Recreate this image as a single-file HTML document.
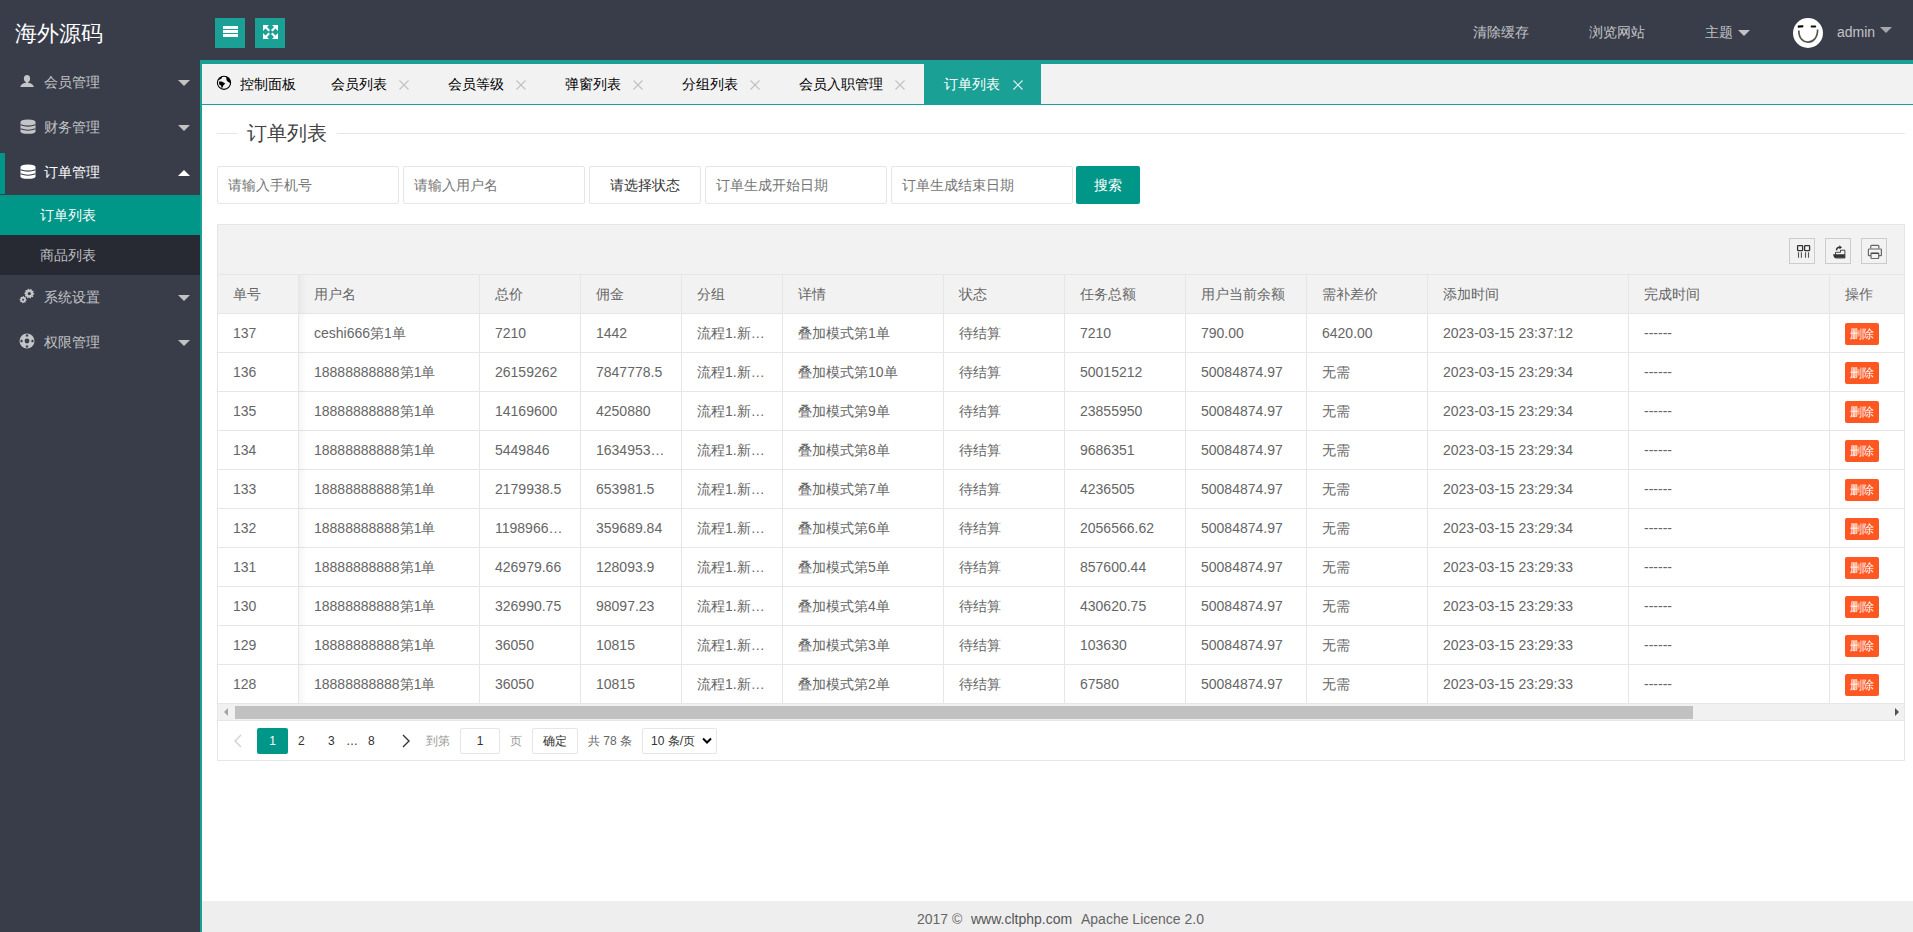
<!DOCTYPE html><html><head><meta charset="utf-8"><title>订单列表</title><style>
*{margin:0;padding:0;box-sizing:border-box}
html,body{width:1913px;height:932px;overflow:hidden;background:#fff;font-family:"Liberation Sans",sans-serif;font-size:14px;color:#333}
.abs{position:absolute}
.hdr{position:absolute;left:0;top:0;width:1913px;height:60px;background:#393D49}
.side{position:absolute;left:0;top:60px;width:200px;height:872px;background:#393D49}
.logo{position:absolute;left:15px;top:16px;font-size:22px;line-height:36px;color:#fff;white-space:nowrap}
.hbtn{position:absolute;top:18px;width:30px;height:30px;background:#1AA094}
.htxt{position:absolute;top:22px;line-height:20px;font-size:14px;color:rgba(255,255,255,.7);white-space:nowrap}
.tri{position:absolute;width:0;height:0;border-style:solid;border-width:6px 6px 0 6px;border-color:#c2c2c2 transparent transparent transparent}
.nav{position:absolute;left:0;width:200px;height:45px}
.nav .t{position:absolute;left:44px;top:0;line-height:45px;font-size:14px;color:rgba(255,255,255,.7);white-space:nowrap}
.nav svg{position:absolute}
.sub{position:absolute;left:0;width:200px;height:40px}
.sub .t{position:absolute;left:40px;top:0;line-height:40px;font-size:14px;color:rgba(255,255,255,.7)}
.bodyl{position:absolute;left:200px;top:60px;width:2px;height:872px;background:#1AA094}
.bodyt{position:absolute;left:200px;top:60px;width:1713px;height:4px;background:#1AA094}
.tabs{position:absolute;left:202px;top:64px;width:1711px;height:41px;background:#f2f2f2;border-bottom:1px solid #1AA094}
.tab{position:absolute;top:0;height:40px;line-height:40px;font-size:14px;color:#000;white-space:nowrap}
.tab .x{position:absolute;top:0;color:#c2c2c2}
.footer{position:absolute;left:202px;top:901px;width:1711px;height:31px;background:#eee;text-align:center;color:#666;font-size:14px;line-height:31px}
.fieldline{position:absolute;top:133px;height:1px;background:#e6e6e6}
.legend{position:absolute;left:247px;top:118px;font-size:20px;line-height:30px;color:#444;font-weight:300}
.inp{position:absolute;top:166px;height:38px;width:182px;border:1px solid #e6e6e6;border-radius:2px;background:#fff;padding-left:10px;line-height:36px;color:#757575;font-size:14px;white-space:nowrap}
.btn{position:absolute;top:166px;height:38px;width:64px;left:1076px;background:#009688;border-radius:2px;color:#fff;text-align:center;line-height:38px;font-size:14px}
.tbl{position:absolute;left:217px;top:224px;width:1688px;height:537px;border:1px solid #e6e6e6;background:#fff}
.tool{position:absolute;left:0;top:0;width:1686px;height:50px;background:#f2f2f2;border-bottom:1px solid #e6e6e6}
.ticon{position:absolute;top:13px;width:26px;height:26px;border:1px solid #ccc;overflow:visible}
.cell{position:absolute;height:39px;line-height:40px;font-size:14px;color:#666;white-space:nowrap;overflow:hidden;text-overflow:ellipsis;padding:0 15px}
.hline{position:absolute;left:217px;width:1688px;height:1px;background:#e6e6e6}
.vline{position:absolute;width:1px;background:#e6e6e6}
.del{position:absolute;left:1845px;width:34px;height:22px;background:#FF5722;border-radius:2px;color:#fff;font-size:12px;line-height:22px;text-align:center}
.pg{position:absolute;top:728px;height:26px;line-height:26px;font-size:12px;color:#333;white-space:nowrap}
</style></head><body>
<div class="hdr"></div>
<div class="logo">海外源码</div>
<div class="hbtn" style="left:215px"><svg width="30" height="30" viewBox="0 0 30 30"><rect x="8" y="8" width="15" height="3" fill="#fff"/><rect x="8" y="12" width="15" height="3" fill="#fff"/><rect x="8" y="16" width="15" height="3" fill="#fff"/></svg></div>
<div class="hbtn" style="left:255px"><svg width="30" height="30" viewBox="0 0 30 30" fill="#fff"><path d="M8 7h6l-2 2 3 3-1.5 1.5-3-3-2.5 2.5z"/><path d="M23 7h-6l2 2-3 3 1.5 1.5 3-3 2.5 2.5z"/><path d="M8 21h6l-2-2 3-3-1.5-1.5-3 3-2.5-2.5z"/><path d="M23 21h-6l2-2-3-3 1.5-1.5 3 3 2.5-2.5z"/></svg></div>
<div class="htxt" style="left:1473px">清除缓存</div>
<div class="htxt" style="left:1589px">浏览网站</div>
<div class="htxt" style="left:1705px">主题</div>
<div class="tri" style="left:1738px;top:30px"></div>
<svg class="abs" style="left:1793px;top:18px" width="30" height="30" viewBox="0 0 30 30"><circle cx="15" cy="15" r="15" fill="#fff"/><path d="M4.8 7.6 L10.3 7.2 L10.3 9.2 L4.8 9.8z" fill="#000"/><rect x="17.6" y="7.4" width="5.6" height="2.2" rx="1" fill="#111"/><path d="M5.8 12.5 C5.5 28.5 25 28 24.6 11.5" stroke="#555" stroke-width="1.7" fill="none"/></svg>
<div class="htxt" style="left:1837px">admin</div>
<div class="tri" style="left:1880px;top:27px;border-top-color:#a8a8ab"></div>
<div class="side"></div>
<div class="nav" style="top:60px"><svg style="left:20px;top:14px" width="15" height="14" viewBox="0 0 15 14"><ellipse cx="7" cy="4.6" rx="3.1" ry="3.7" fill="#c4c5c8"/><rect x="6" y="7" width="2" height="2.5" fill="#c4c5c8"/><path fill="#c4c5c8" d="M0.2 13 C1 10.5 3 9.2 5.5 8.8 L8.5 8.8 C11 9.2 13 10.5 14 13 Z"/></svg><div class="t" style="color:rgba(255,255,255,.7)">会员管理</div><div class="tri" style="left:178px;top:20px"></div></div>
<div class="nav" style="top:105px"><svg style="left:19.5px;top:13.5px" width="16" height="15" viewBox="0 0 16 15"><path fill="#c4c5c8" d="M0.5 3 Q0.5 0.5 8 0.5 Q15.5 0.5 15.5 3 L15.5 12.5 Q15.5 14.8 8 14.8 Q0.5 14.8 0.5 12.5 Z"/><path d="M0.5 5.7 Q8 8.6 15.5 5.7 M0.5 9.8 Q8 12.7 15.5 9.8" stroke="#393D49" stroke-width="1.1" fill="none"/></svg><div class="t" style="color:rgba(255,255,255,.7)">财务管理</div><div class="tri" style="left:178px;top:20px"></div></div>
<div class="nav" style="top:150px"><svg style="left:19.5px;top:13.5px" width="16" height="15" viewBox="0 0 16 15"><path fill="#fff" d="M0.5 3 Q0.5 0.5 8 0.5 Q15.5 0.5 15.5 3 L15.5 12.5 Q15.5 14.8 8 14.8 Q0.5 14.8 0.5 12.5 Z"/><path d="M0.5 5.7 Q8 8.6 15.5 5.7 M0.5 9.8 Q8 12.7 15.5 9.8" stroke="#393D49" stroke-width="1.1" fill="none"/></svg><div class="t" style="color:#fff">订单管理</div><div class="tri" style="left:178px;top:20px;border-width:0 6px 6px 6px;border-color:transparent transparent #fff transparent"></div></div>
<div class="abs" style="left:0;top:153px;width:5px;height:41px;background:#009688"></div>
<div class="sub" style="top:195px;background:#009688"><div class="t" style="color:#fff">订单列表</div></div>
<div class="sub" style="top:235px;background:rgba(0,0,0,.3)"><div class="t">商品列表</div></div>
<div class="nav" style="top:275px"><svg style="left:18px;top:12px" width="18" height="18" viewBox="0 0 18 18"><path fill="#c4c5c8" d="M16.30 6.60 L16.24 7.38 L15.10 7.84 L14.86 8.42 L15.35 9.54 L14.84 10.14 L13.65 9.84 L13.12 10.16 L12.85 11.36 L12.08 11.54 L11.30 10.60 L10.67 10.55 L9.75 11.36 L9.03 11.06 L8.95 9.84 L8.47 9.43 L7.25 9.54 L6.84 8.87 L7.50 7.84 L7.35 7.23 L6.30 6.60 L6.36 5.82 L7.50 5.36 L7.74 4.78 L7.25 3.66 L7.76 3.06 L8.95 3.36 L9.48 3.04 L9.75 1.84 L10.52 1.66 L11.30 2.60 L11.93 2.65 L12.85 1.84 L13.57 2.14 L13.65 3.36 L14.13 3.77 L15.35 3.66 L15.76 4.33 L15.10 5.36 L15.25 5.97 Z"/><circle cx="11.30" cy="6.60" r="1.60" fill="#393D49"/><path fill="#c4c5c8" d="M8.70 12.70 L8.63 13.40 L7.69 13.77 L7.43 14.26 L7.65 15.25 L7.10 15.69 L6.17 15.29 L5.65 15.45 L5.10 16.30 L4.40 16.23 L4.03 15.29 L3.54 15.03 L2.55 15.25 L2.11 14.70 L2.51 13.77 L2.35 13.25 L1.50 12.70 L1.57 12.00 L2.51 11.63 L2.77 11.14 L2.55 10.15 L3.10 9.71 L4.03 10.11 L4.55 9.95 L5.10 9.10 L5.80 9.17 L6.17 10.11 L6.66 10.37 L7.65 10.15 L8.09 10.70 L7.69 11.63 L7.85 12.15 Z"/><circle cx="5.10" cy="12.70" r="1.00" fill="#393D49"/></svg><div class="t" style="color:rgba(255,255,255,.7)">系统设置</div><div class="tri" style="left:178px;top:20px"></div></div>
<div class="nav" style="top:320px"><svg style="left:19px;top:12.5px" width="16" height="16" viewBox="0 0 16 16"><circle cx="8" cy="8" r="7.5" fill="#c4c5c8"/><circle cx="8" cy="8" r="2.4" fill="#393D49"/><rect x="6.8" y="1.5" width="2.4" height="2" fill="#393D49"/><rect x="6.8" y="12.5" width="2.4" height="2" fill="#393D49"/><rect x="1.5" y="6.8" width="2" height="2.4" fill="#393D49"/><rect x="12.5" y="6.8" width="2" height="2.4" fill="#393D49"/></svg><div class="t" style="color:rgba(255,255,255,.7)">权限管理</div><div class="tri" style="left:178px;top:20px"></div></div>
<div class="bodyl"></div><div class="bodyt"></div>
<div class="tabs"></div>
<svg class="abs" style="left:214px;top:73px" width="20" height="20" viewBox="0 0 20 20"><circle cx="10" cy="9.8" r="6.6" fill="none" stroke="#000" stroke-width="1.1"/><path fill="#000" d="M4.3 6.8 Q5.6 4.4 8.2 3.6 L7.6 5.4 L5.4 6.8 Z M5 8.4 L7.8 8.6 L11.2 10.6 L9.3 12.6 L7.8 15.8 L7 12.6 L5.2 11.6 Z M12.2 3.6 Q16.2 4.8 16.8 9.6 L15.4 9.8 L13.6 8.6 Q12 7.2 12.2 3.6 Z"/></svg>
<div class="tab" style="left:240px;top:64px">控制面板</div>
<div class="tab" style="left:331px;top:64px">会员列表</div>
<svg class="abs" style="left:399px;top:80px" width="10" height="10" viewBox="0 0 10 10"><path d="M0.5 0.5L9.5 9.5M9.5 0.5L0.5 9.5" stroke="#c2c2c2" stroke-width="1.2"/></svg>
<div class="tab" style="left:448px;top:64px">会员等级</div>
<svg class="abs" style="left:516px;top:80px" width="10" height="10" viewBox="0 0 10 10"><path d="M0.5 0.5L9.5 9.5M9.5 0.5L0.5 9.5" stroke="#c2c2c2" stroke-width="1.2"/></svg>
<div class="tab" style="left:565px;top:64px">弹窗列表</div>
<svg class="abs" style="left:633px;top:80px" width="10" height="10" viewBox="0 0 10 10"><path d="M0.5 0.5L9.5 9.5M9.5 0.5L0.5 9.5" stroke="#c2c2c2" stroke-width="1.2"/></svg>
<div class="tab" style="left:682px;top:64px">分组列表</div>
<svg class="abs" style="left:750px;top:80px" width="10" height="10" viewBox="0 0 10 10"><path d="M0.5 0.5L9.5 9.5M9.5 0.5L0.5 9.5" stroke="#c2c2c2" stroke-width="1.2"/></svg>
<div class="tab" style="left:799px;top:64px">会员入职管理</div>
<svg class="abs" style="left:895px;top:80px" width="10" height="10" viewBox="0 0 10 10"><path d="M0.5 0.5L9.5 9.5M9.5 0.5L0.5 9.5" stroke="#c2c2c2" stroke-width="1.2"/></svg>
<div class="abs" style="left:924px;top:64px;width:117px;height:40px;background:#1AA094"></div>
<div class="tab" style="left:944px;top:64px;color:#fff">订单列表</div>
<svg class="abs" style="left:1013px;top:80px" width="10" height="10" viewBox="0 0 10 10"><path d="M0.5 0.5L9.5 9.5M9.5 0.5L0.5 9.5" stroke="#fff" stroke-width="1.2" opacity=".85"/></svg>
<div class="fieldline" style="left:217px;width:20px"></div>
<div class="fieldline" style="left:337px;width:1568px"></div>
<div class="legend">订单列表</div>
<div class="inp" style="left:217px">请输入手机号</div>
<div class="inp" style="left:403px">请输入用户名</div>
<div class="inp" style="left:589px;width:112px;padding:0;text-align:center;color:#333">请选择状态</div>
<div class="inp" style="left:705px">订单生成开始日期</div>
<div class="inp" style="left:891px">订单生成结束日期</div>
<div class="btn">搜索</div>
<div class="tbl"><div class="tool"></div></div>
<div class="ticon abs" style="left:1789px;top:238px"><svg width="26" height="26" viewBox="0 0 26 26" style="position:absolute;left:-1px;top:-1px"><rect x="8.6" y="7.6" width="5" height="5" rx="0.6" fill="none" stroke="#333" stroke-width="1.3"/><rect x="15.6" y="7.6" width="5" height="5" rx="0.6" fill="none" stroke="#333" stroke-width="1.3"/><path d="M9.5 14.3v5.5M12.4 14.3v5.5M16.5 14.3v5.5M19.5 14.3v5.5" stroke="#555" stroke-width="1.1"/></svg></div>
<div class="ticon abs" style="left:1825px;top:238px"><svg width="26" height="26" viewBox="0 0 26 26" style="position:absolute;left:-1px;top:-1px"><path d="M10.5 16V14.3H15.5V12.2H19.9V20H10.5z" fill="#f2f2f2" stroke="#333" stroke-width="0.9"/><path d="M8 16.2H19.9V19.8H9.2z" fill="#333"/><path d="M11.6 12.4C11.4 10 13 9 15.2 9.3" stroke="#333" stroke-width="1.5" fill="none"/><path d="M14.4 7.3L17 9.5L14.4 11.2z" fill="#333"/></svg></div>
<div class="ticon abs" style="left:1861px;top:238px"><svg width="26" height="26" viewBox="0 0 26 26" style="position:absolute;left:-1px;top:-1px" fill="none" stroke="#666" stroke-width="1.2"><path d="M9.7 10.6V8.2Q9.7 7.3 10.6 7.3H17Q17.9 7.3 17.9 8.2V10.6"/><path d="M9.8 17.6H8Q7.4 17.6 7.4 17V11.8Q7.4 11 8.2 11H19.6Q20.4 11 20.4 11.8V17Q20.4 17.6 19.8 17.6H17.9"/><path d="M10 15.3H17.7V19.8Q17.7 20.5 17 20.5H10.7Q10 20.5 10 19.8Z" fill="#f2f2f2"/><path d="M10.3 15.3H17.4" stroke="#444" stroke-width="1.4"/></svg></div>
<div class="abs" style="left:218px;top:275px;width:1686px;height:38px;background:#f2f2f2"></div>
<div class="hline" style="top:274px"></div>
<div class="hline" style="top:313px"></div>
<div class="hline" style="top:352px"></div>
<div class="hline" style="top:391px"></div>
<div class="hline" style="top:430px"></div>
<div class="hline" style="top:469px"></div>
<div class="hline" style="top:508px"></div>
<div class="hline" style="top:547px"></div>
<div class="hline" style="top:586px"></div>
<div class="hline" style="top:625px"></div>
<div class="hline" style="top:664px"></div>
<div class="hline" style="top:703px"></div>
<div class="hline" style="top:703px"></div>
<div class="vline" style="left:298px;top:275px;height:428px"></div>
<div class="vline" style="left:479px;top:275px;height:428px"></div>
<div class="vline" style="left:580px;top:275px;height:428px"></div>
<div class="vline" style="left:681px;top:275px;height:428px"></div>
<div class="vline" style="left:782px;top:275px;height:428px"></div>
<div class="vline" style="left:943px;top:275px;height:428px"></div>
<div class="vline" style="left:1064px;top:275px;height:428px"></div>
<div class="vline" style="left:1185px;top:275px;height:428px"></div>
<div class="vline" style="left:1306px;top:275px;height:428px"></div>
<div class="vline" style="left:1427px;top:275px;height:428px"></div>
<div class="vline" style="left:1628px;top:275px;height:428px"></div>
<div class="vline" style="left:1829px;top:275px;height:428px"></div>
<div class="abs" style="left:299px;top:275px;width:8px;height:428px;background:linear-gradient(to right,rgba(0,0,0,.035),rgba(0,0,0,0))"></div>
<div class="cell" style="left:218px;top:274px;width:80px">单号</div>
<div class="cell" style="left:299px;top:274px;width:180px">用户名</div>
<div class="cell" style="left:480px;top:274px;width:100px">总价</div>
<div class="cell" style="left:581px;top:274px;width:100px">佣金</div>
<div class="cell" style="left:682px;top:274px;width:100px">分组</div>
<div class="cell" style="left:783px;top:274px;width:160px">详情</div>
<div class="cell" style="left:944px;top:274px;width:120px">状态</div>
<div class="cell" style="left:1065px;top:274px;width:120px">任务总额</div>
<div class="cell" style="left:1186px;top:274px;width:120px">用户当前余额</div>
<div class="cell" style="left:1307px;top:274px;width:120px">需补差价</div>
<div class="cell" style="left:1428px;top:274px;width:200px">添加时间</div>
<div class="cell" style="left:1629px;top:274px;width:200px">完成时间</div>
<div class="cell" style="left:1830px;top:274px;width:74px">操作</div>
<div class="cell" style="left:218px;top:313px;width:80px">137</div>
<div class="cell" style="left:299px;top:313px;width:180px">ceshi666第1单</div>
<div class="cell" style="left:480px;top:313px;width:100px">7210</div>
<div class="cell" style="left:581px;top:313px;width:100px">1442</div>
<div class="cell" style="left:682px;top:313px;width:100px">流程1.新…</div>
<div class="cell" style="left:783px;top:313px;width:160px">叠加模式第1单</div>
<div class="cell" style="left:944px;top:313px;width:120px">待结算</div>
<div class="cell" style="left:1065px;top:313px;width:120px">7210</div>
<div class="cell" style="left:1186px;top:313px;width:120px">790.00</div>
<div class="cell" style="left:1307px;top:313px;width:120px">6420.00</div>
<div class="cell" style="left:1428px;top:313px;width:200px">2023-03-15 23:37:12</div>
<div class="cell" style="left:1629px;top:313px;width:200px">------</div>
<div class="del" style="top:323px">删除</div>
<div class="cell" style="left:218px;top:352px;width:80px">136</div>
<div class="cell" style="left:299px;top:352px;width:180px">18888888888第1单</div>
<div class="cell" style="left:480px;top:352px;width:100px">26159262</div>
<div class="cell" style="left:581px;top:352px;width:100px">7847778.5</div>
<div class="cell" style="left:682px;top:352px;width:100px">流程1.新…</div>
<div class="cell" style="left:783px;top:352px;width:160px">叠加模式第10单</div>
<div class="cell" style="left:944px;top:352px;width:120px">待结算</div>
<div class="cell" style="left:1065px;top:352px;width:120px">50015212</div>
<div class="cell" style="left:1186px;top:352px;width:120px">50084874.97</div>
<div class="cell" style="left:1307px;top:352px;width:120px">无需</div>
<div class="cell" style="left:1428px;top:352px;width:200px">2023-03-15 23:29:34</div>
<div class="cell" style="left:1629px;top:352px;width:200px">------</div>
<div class="del" style="top:362px">删除</div>
<div class="cell" style="left:218px;top:391px;width:80px">135</div>
<div class="cell" style="left:299px;top:391px;width:180px">18888888888第1单</div>
<div class="cell" style="left:480px;top:391px;width:100px">14169600</div>
<div class="cell" style="left:581px;top:391px;width:100px">4250880</div>
<div class="cell" style="left:682px;top:391px;width:100px">流程1.新…</div>
<div class="cell" style="left:783px;top:391px;width:160px">叠加模式第9单</div>
<div class="cell" style="left:944px;top:391px;width:120px">待结算</div>
<div class="cell" style="left:1065px;top:391px;width:120px">23855950</div>
<div class="cell" style="left:1186px;top:391px;width:120px">50084874.97</div>
<div class="cell" style="left:1307px;top:391px;width:120px">无需</div>
<div class="cell" style="left:1428px;top:391px;width:200px">2023-03-15 23:29:34</div>
<div class="cell" style="left:1629px;top:391px;width:200px">------</div>
<div class="del" style="top:401px">删除</div>
<div class="cell" style="left:218px;top:430px;width:80px">134</div>
<div class="cell" style="left:299px;top:430px;width:180px">18888888888第1单</div>
<div class="cell" style="left:480px;top:430px;width:100px">5449846</div>
<div class="cell" style="left:581px;top:430px;width:100px">1634953…</div>
<div class="cell" style="left:682px;top:430px;width:100px">流程1.新…</div>
<div class="cell" style="left:783px;top:430px;width:160px">叠加模式第8单</div>
<div class="cell" style="left:944px;top:430px;width:120px">待结算</div>
<div class="cell" style="left:1065px;top:430px;width:120px">9686351</div>
<div class="cell" style="left:1186px;top:430px;width:120px">50084874.97</div>
<div class="cell" style="left:1307px;top:430px;width:120px">无需</div>
<div class="cell" style="left:1428px;top:430px;width:200px">2023-03-15 23:29:34</div>
<div class="cell" style="left:1629px;top:430px;width:200px">------</div>
<div class="del" style="top:440px">删除</div>
<div class="cell" style="left:218px;top:469px;width:80px">133</div>
<div class="cell" style="left:299px;top:469px;width:180px">18888888888第1单</div>
<div class="cell" style="left:480px;top:469px;width:100px">2179938.5</div>
<div class="cell" style="left:581px;top:469px;width:100px">653981.5</div>
<div class="cell" style="left:682px;top:469px;width:100px">流程1.新…</div>
<div class="cell" style="left:783px;top:469px;width:160px">叠加模式第7单</div>
<div class="cell" style="left:944px;top:469px;width:120px">待结算</div>
<div class="cell" style="left:1065px;top:469px;width:120px">4236505</div>
<div class="cell" style="left:1186px;top:469px;width:120px">50084874.97</div>
<div class="cell" style="left:1307px;top:469px;width:120px">无需</div>
<div class="cell" style="left:1428px;top:469px;width:200px">2023-03-15 23:29:34</div>
<div class="cell" style="left:1629px;top:469px;width:200px">------</div>
<div class="del" style="top:479px">删除</div>
<div class="cell" style="left:218px;top:508px;width:80px">132</div>
<div class="cell" style="left:299px;top:508px;width:180px">18888888888第1单</div>
<div class="cell" style="left:480px;top:508px;width:100px">1198966…</div>
<div class="cell" style="left:581px;top:508px;width:100px">359689.84</div>
<div class="cell" style="left:682px;top:508px;width:100px">流程1.新…</div>
<div class="cell" style="left:783px;top:508px;width:160px">叠加模式第6单</div>
<div class="cell" style="left:944px;top:508px;width:120px">待结算</div>
<div class="cell" style="left:1065px;top:508px;width:120px">2056566.62</div>
<div class="cell" style="left:1186px;top:508px;width:120px">50084874.97</div>
<div class="cell" style="left:1307px;top:508px;width:120px">无需</div>
<div class="cell" style="left:1428px;top:508px;width:200px">2023-03-15 23:29:34</div>
<div class="cell" style="left:1629px;top:508px;width:200px">------</div>
<div class="del" style="top:518px">删除</div>
<div class="cell" style="left:218px;top:547px;width:80px">131</div>
<div class="cell" style="left:299px;top:547px;width:180px">18888888888第1单</div>
<div class="cell" style="left:480px;top:547px;width:100px">426979.66</div>
<div class="cell" style="left:581px;top:547px;width:100px">128093.9</div>
<div class="cell" style="left:682px;top:547px;width:100px">流程1.新…</div>
<div class="cell" style="left:783px;top:547px;width:160px">叠加模式第5单</div>
<div class="cell" style="left:944px;top:547px;width:120px">待结算</div>
<div class="cell" style="left:1065px;top:547px;width:120px">857600.44</div>
<div class="cell" style="left:1186px;top:547px;width:120px">50084874.97</div>
<div class="cell" style="left:1307px;top:547px;width:120px">无需</div>
<div class="cell" style="left:1428px;top:547px;width:200px">2023-03-15 23:29:33</div>
<div class="cell" style="left:1629px;top:547px;width:200px">------</div>
<div class="del" style="top:557px">删除</div>
<div class="cell" style="left:218px;top:586px;width:80px">130</div>
<div class="cell" style="left:299px;top:586px;width:180px">18888888888第1单</div>
<div class="cell" style="left:480px;top:586px;width:100px">326990.75</div>
<div class="cell" style="left:581px;top:586px;width:100px">98097.23</div>
<div class="cell" style="left:682px;top:586px;width:100px">流程1.新…</div>
<div class="cell" style="left:783px;top:586px;width:160px">叠加模式第4单</div>
<div class="cell" style="left:944px;top:586px;width:120px">待结算</div>
<div class="cell" style="left:1065px;top:586px;width:120px">430620.75</div>
<div class="cell" style="left:1186px;top:586px;width:120px">50084874.97</div>
<div class="cell" style="left:1307px;top:586px;width:120px">无需</div>
<div class="cell" style="left:1428px;top:586px;width:200px">2023-03-15 23:29:33</div>
<div class="cell" style="left:1629px;top:586px;width:200px">------</div>
<div class="del" style="top:596px">删除</div>
<div class="cell" style="left:218px;top:625px;width:80px">129</div>
<div class="cell" style="left:299px;top:625px;width:180px">18888888888第1单</div>
<div class="cell" style="left:480px;top:625px;width:100px">36050</div>
<div class="cell" style="left:581px;top:625px;width:100px">10815</div>
<div class="cell" style="left:682px;top:625px;width:100px">流程1.新…</div>
<div class="cell" style="left:783px;top:625px;width:160px">叠加模式第3单</div>
<div class="cell" style="left:944px;top:625px;width:120px">待结算</div>
<div class="cell" style="left:1065px;top:625px;width:120px">103630</div>
<div class="cell" style="left:1186px;top:625px;width:120px">50084874.97</div>
<div class="cell" style="left:1307px;top:625px;width:120px">无需</div>
<div class="cell" style="left:1428px;top:625px;width:200px">2023-03-15 23:29:33</div>
<div class="cell" style="left:1629px;top:625px;width:200px">------</div>
<div class="del" style="top:635px">删除</div>
<div class="cell" style="left:218px;top:664px;width:80px">128</div>
<div class="cell" style="left:299px;top:664px;width:180px">18888888888第1单</div>
<div class="cell" style="left:480px;top:664px;width:100px">36050</div>
<div class="cell" style="left:581px;top:664px;width:100px">10815</div>
<div class="cell" style="left:682px;top:664px;width:100px">流程1.新…</div>
<div class="cell" style="left:783px;top:664px;width:160px">叠加模式第2单</div>
<div class="cell" style="left:944px;top:664px;width:120px">待结算</div>
<div class="cell" style="left:1065px;top:664px;width:120px">67580</div>
<div class="cell" style="left:1186px;top:664px;width:120px">50084874.97</div>
<div class="cell" style="left:1307px;top:664px;width:120px">无需</div>
<div class="cell" style="left:1428px;top:664px;width:200px">2023-03-15 23:29:33</div>
<div class="cell" style="left:1629px;top:664px;width:200px">------</div>
<div class="del" style="top:674px">删除</div>
<div class="abs" style="left:218px;top:704px;width:1686px;height:16px;background:#f1f1f1"></div>
<div class="abs" style="left:235px;top:706px;width:1458px;height:13px;background:#c1c1c1"></div>
<div class="abs" style="left:224px;top:708px;width:0;height:0;border-style:solid;border-width:4px 4px 4px 0;border-color:transparent #a3a3a3 transparent transparent"></div>
<div class="abs" style="left:1895px;top:708px;width:0;height:0;border-style:solid;border-width:4px 0 4px 4px;border-color:transparent transparent transparent #505050"></div>
<div class="hline" style="top:720px"></div>
<svg class="abs" style="left:233px;top:734px" width="10" height="14" viewBox="0 0 10 14"><path d="M8 1L2 7l6 6" stroke="#d2d2d2" stroke-width="1.4" fill="none"/></svg>
<div class="abs" style="left:257px;top:728px;width:31px;height:26px;background:#009688;border-radius:2px;color:#fff;font-size:12px;line-height:26px;text-align:center">1</div>
<div class="pg" style="left:298px">2</div>
<div class="pg" style="left:328px">3</div>
<div class="pg" style="left:346px">…</div>
<div class="pg" style="left:368px">8</div>
<svg class="abs" style="left:401px;top:734px" width="10" height="14" viewBox="0 0 10 14"><path d="M2 1l6 6-6 6" stroke="#333" stroke-width="1.4" fill="none"/></svg>
<div class="pg" style="left:426px;color:#999">到第</div>
<div class="abs" style="left:460px;top:728px;width:40px;height:26px;border:1px solid #e6e6e6;border-radius:2px;font-size:12px;line-height:24px;text-align:center;color:#333">1</div>
<div class="pg" style="left:510px;color:#999">页</div>
<div class="abs" style="left:532px;top:728px;width:46px;height:26px;border:1px solid #e6e6e6;border-radius:2px;font-size:12px;line-height:24px;text-align:center;color:#333">确定</div>
<div class="pg" style="left:588px;color:#666">共 78 条</div>
<div class="abs" style="left:642px;top:728px;width:75px;height:26px;border:1px solid #e6e6e6;border-radius:2px;font-size:12px;line-height:24px;color:#333;padding-left:8px">10 条/页</div>
<svg class="abs" style="left:702px;top:737px" width="10" height="8" viewBox="0 0 10 8"><path d="M1 1.5l4 4 4-4" stroke="#000" stroke-width="2" fill="none"/></svg>
<div class="footer"></div>
<div class="abs" style="left:917px;top:911px;line-height:16px;font-size:14px;color:#666;white-space:nowrap">2017 ©</div>
<div class="abs" style="left:971px;top:911px;line-height:16px;font-size:14px;color:#555;white-space:nowrap">www.cltphp.com</div>
<div class="abs" style="left:1081px;top:911px;line-height:16px;font-size:14px;color:#666;white-space:nowrap">Apache Licence 2.0</div>
</body></html>
